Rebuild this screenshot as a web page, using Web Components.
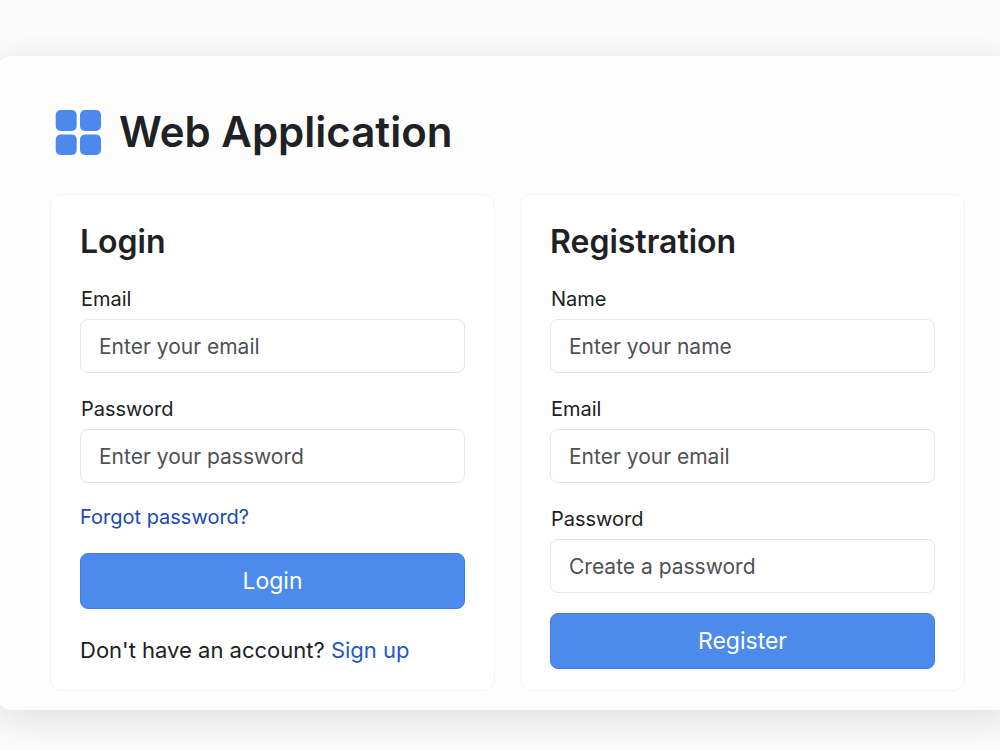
<!DOCTYPE html>
<html lang="en">
<head>
<meta charset="utf-8">
<meta name="viewport" content="width=device-width, initial-scale=1">
<title>Web Application</title>
<style>
  body {
    margin: 0;
    min-height: 100vh;
    overflow-x: hidden;
    background: #fbfbfb;
    color: #202124;
    font-family: Inter, "Liberation Sans", sans-serif;
  }
</style>
</head>
<body>
<app-shell>
  <app-brand slot="header">Web Application</app-brand>
  <auth-card heading="Login">
    <text-field label="Email" type="email" placeholder="Enter your email"></text-field>
    <text-field label="Password" type="password" placeholder="Enter your password"></text-field>
    <text-link href="#forgot" class="forgot">Forgot password?</text-link>
    <primary-button>Login</primary-button>
    <sign-up-note></sign-up-note>
  </auth-card>
  <auth-card heading="Registration">
    <text-field label="Name" type="text" placeholder="Enter your name"></text-field>
    <text-field label="Email" type="email" placeholder="Enter your email"></text-field>
    <text-field label="Password" type="password" placeholder="Create a password"></text-field>
    <primary-button>Register</primary-button>
  </auth-card>
</app-shell>

<script>
  class BaseElement extends HTMLElement {
    constructor() {
      super();
      this.attachShadow({ mode: "open" });
    }
    connectedCallback() {
      this.shadowRoot.innerHTML = this.render();
    }
  }

  customElements.define("app-shell", class extends BaseElement {
    render() {
      return `
        <style>
          :host { display: block; padding: 56px 0 40px; overflow: hidden; }
          main {
            margin: 0 -16px 0 -4px;
            padding: 48px 51px 19px 54px;
            border-radius: 16px;
            background: #fdfdfd;
            box-shadow: 0 8px 40px rgba(0, 0, 0, .12);
          }
          .cards {
            display: grid;
            grid-template-columns: repeat(auto-fit, minmax(340px, 1fr));
            gap: 25px;
            margin-top: 34px;
          }
        </style>
        <main>
          <slot name="header"></slot>
          <div class="cards"><slot></slot></div>
        </main>`;
    }
  });

  customElements.define("app-brand", class extends BaseElement {
    render() {
      return `
        <style>
          :host { display: flex; align-items: center; gap: 18px; padding-left: 5px; }
          svg { width: 46px; height: 46px; flex: none; fill: #4b8aec; }
          h1 { margin: 0; font-size: 42px; line-height: 56px; font-weight: 600; }
        </style>
        <svg viewBox="0 0 46 46" aria-hidden="true">
          <rect x="0.7" y="1" width="21" height="21" rx="5"/>
          <rect x="25" y="1" width="21" height="21" rx="5"/>
          <rect x="0.7" y="25.5" width="21" height="20.5" rx="5"/>
          <rect x="25" y="25.5" width="21" height="20.5" rx="5"/>
        </svg>
        <h1><slot></slot></h1>`;
    }
  });

  customElements.define("auth-card", class extends BaseElement {
    render() {
      return `
        <style>
          :host {
            display: block;
            box-sizing: border-box;
            padding: 27px 29px 21px;
            border: 1px solid #f4f4f5;
            border-radius: 12px;
            background: #fff;
          }
          h2 { margin: 0 0 25px; font-size: 32px; line-height: 40px; font-weight: 600; }
          form { display: flex; flex-direction: column; }
          ::slotted(text-field:not(:first-child)) { margin-top: 24px; }
          ::slotted(.forgot) { margin-top: 22px; }
          ::slotted(primary-button) { margin-top: 20px; }
          ::slotted(.forgot) { margin-bottom: 4px; }
        </style>
        <h2>${this.getAttribute("heading")}</h2>
        <form><slot></slot></form>`;
    }
  });

  customElements.define("text-field", class extends BaseElement {
    render() {
      return `
        <style>
          :host { display: flex; flex-direction: column; gap: 8px; }
          label { padding-left: 1px; font-size: 20px; line-height: 24px; }
          input {
            box-sizing: border-box;
            width: 100%;
            height: 54px;
            margin: 0;
            padding: 0 18px;
            border: 1px solid #e5e6e8;
            border-radius: 8px;
            background: #fff;
            color: #202124;
            font: 21px Inter, "Liberation Sans", sans-serif;
          }
          input::placeholder { color: #505154; opacity: 1; }
          input:focus { outline: 2px solid #4b8aec; }
        </style>
        <label for="field">${this.getAttribute("label")}</label>
        <input id="field" type="${this.getAttribute("type")}" placeholder="${this.getAttribute("placeholder")}">`;
    }
  });

  customElements.define("text-link", class extends BaseElement {
    render() {
      return `
        <style>
          :host { display: block; font-size: 20px; line-height: 24px; }
          a { color: #1a49b5; text-decoration: none; }
          a:hover { text-decoration: underline; }
        </style>
        <a href="${this.getAttribute("href")}"><slot></slot></a>`;
    }
  });

  customElements.define("primary-button", class extends BaseElement {
    render() {
      return `
        <style>
          :host { display: block; }
          button {
            display: block;
            width: 100%;
            height: 56px;
            padding: 0;
            border: 1px solid #3f80e8;
            border-radius: 8px;
            background: #4c8bec;
            color: #fff;
            font: 23px Inter, "Liberation Sans", sans-serif;
            cursor: pointer;
          }
          button:hover { background: #3f80e8; }
        </style>
        <button type="button"><slot></slot></button>`;
    }
  });

  customElements.define("sign-up-note", class extends BaseElement {
    render() {
      return `
        <style>
          :host { display: block; margin-top: 27px; font-size: 22px; line-height: 28px; }
          p { margin: 0; }
          a { color: #1f58cc; text-decoration: none; }
          a:hover { text-decoration: underline; }
        </style>
        <p>Don't have an account? <a href="#sign-up">Sign up</a></p>`;
    }
  });
</script>
</body>
</html>
